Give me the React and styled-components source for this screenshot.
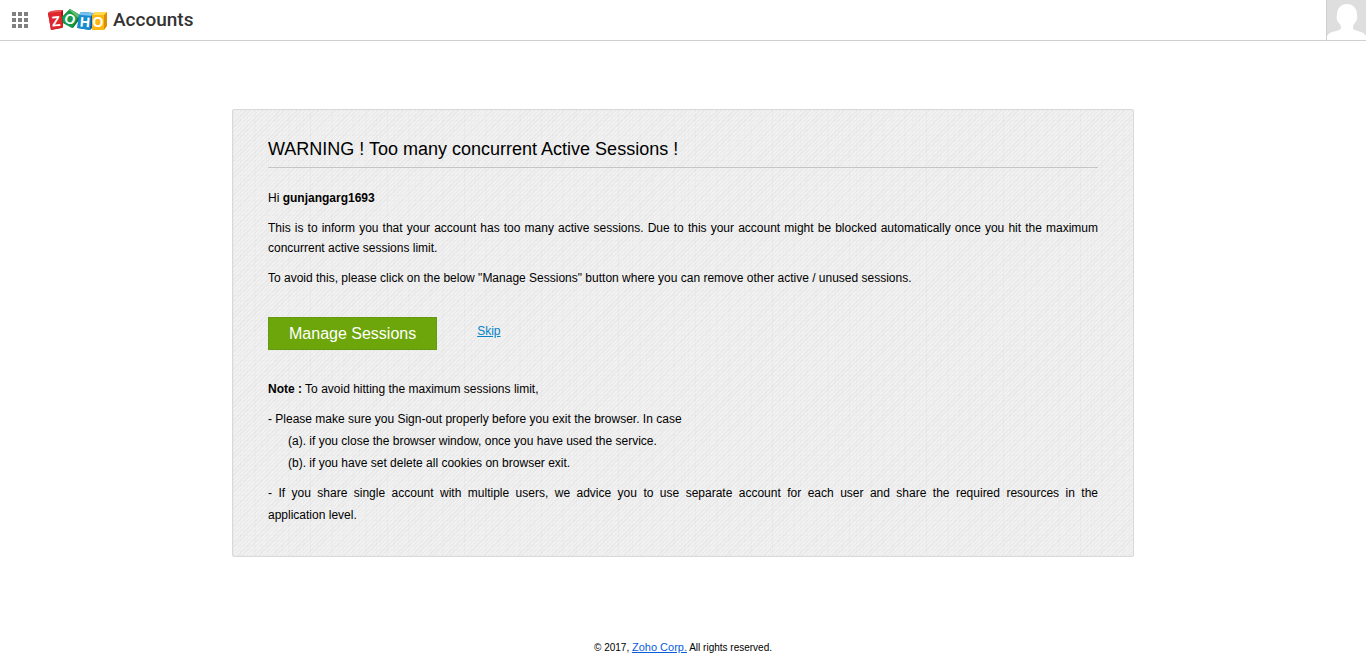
import React from "react";
import styled, { createGlobalStyle } from "styled-components";

const GlobalStyle = createGlobalStyle`
  *, *::before, *::after { box-sizing: border-box; }
  body {
    margin: 0;
    background: #fff;
    color: #000;
    font: 12px/20px "Liberation Sans", Arial, sans-serif;
  }
`;

const Header = styled.header`
  display: flex;
  align-items: center;
  height: 41px;
  padding-left: 12px;
  border-bottom: 1px solid #cfcfcf;
`;

const AppsButton = styled.button`
  display: grid;
  grid-template-columns: repeat(3, 4px);
  gap: 2px;
  padding: 0;
  border: 0;
  background: none;
  cursor: pointer;
`;

const Dot = styled.span`
  width: 4px;
  height: 4px;
  background: #808080;
`;

const Brand = styled.a`
  display: flex;
  align-items: center;
  gap: 5px;
  margin-left: 20px;
  color: #333;
  text-decoration: none;
`;

const BrandName = styled.span`
  font: 500 19px/24px Roboto, sans-serif;
`;

const ProfileButton = styled.button`
  display: block;
  width: 40px;
  height: 40px;
  margin-left: auto;
  padding: 0;
  border: 0;
  border-left: 1px solid #cfcfcf;
  background: #dedede;
  cursor: pointer;

  svg { display: block; }
`;

const Panel = styled.main`
  max-width: 902px;
  margin: 68px auto 0;
  padding: 24px 35px 30px;
  border: 1px solid #d9d9d9;
  border-radius: 2px;
  background:
    repeating-linear-gradient(135deg, rgba(0, 0, 0, 0.03) 0 1px, transparent 1px 3px),
    repeating-linear-gradient(90deg, rgba(0, 0, 0, 0.012) 0 1px, transparent 1px 7px),
    repeating-linear-gradient(90deg, rgba(0, 0, 0, 0.012) 0 1px, transparent 1px 11px),
    repeating-linear-gradient(0deg, rgba(0, 0, 0, 0.012) 0 1px, transparent 1px 5px),
    #f1f1f1;
`;

const Title = styled.h1`
  margin: 0 0 20px;
  padding-bottom: 3px;
  border-bottom: 1px solid #c4c6c6;
  font-size: 18px;
  font-weight: 400;
  line-height: 30px;
`;

const Paragraph = styled.p`
  margin: 0 0 10px;
  line-height: ${({ $loose }) => ($loose ? 22 : 20)}px;
  text-align: justify;

  &:last-child { margin-bottom: 0; }
`;

const Actions = styled.div`
  display: flex;
  align-items: flex-start;
  gap: 40px;
  margin: 29px 0;
`;

const PrimaryButton = styled.button`
  height: 33px;
  padding: 0 20px;
  border: 1px solid #649a0e;
  background: #6da60a;
  color: #fff;
  font: 16px/20px "Liberation Sans", Arial, sans-serif;
  cursor: pointer;
`;

const SkipLink = styled.a`
  padding-top: 4px;
  color: #0483c8;
`;

const CaseList = styled.ul`
  margin: -9px 0 8px;
  padding-left: 20px;
  line-height: 22px;
  list-style: none;
`;

const Footer = styled.footer`
  margin-top: 80px;
  font-size: 10px;
  text-align: center;

  a { color: #085ddc; font-size: 11px; }
`;

const TileLetter = styled.text`
  fill: #fff;
  font: 700 14px "Liberation Sans", Arial, sans-serif;
  text-anchor: middle;
`;

function ZohoLogo() {
  return (
    <svg width="60" height="22" viewBox="0 0 60 22" role="img" aria-label="Zoho">
      <path d="M0 4 3 2 15 1 15 18 14 19 3 21Z" fill="#a90f19" />
      <path d="M0 4 13 3 15 18 3 21Z" fill="#e0252c" />
      <path d="M0 4 3 2 15 1 13 3Z" fill="#ef5350" />
      <path d="M14 8 22 0 32 6 31 11 25 19 15 14Z" fill="#087b35" />
      <path d="M14 8 21 1 30 9 24 19 15 14Z" fill="#169b49" />
      <path d="M21 1 22 0 32 6 30 9Z" fill="#63bd70" />
      <path d="M31 6 33 3 46 4 44 19 42 21 30 19Z" fill="#075e9e" />
      <path d="M31 6 43 7 42 21 29 19Z" fill="#168bd0" />
      <path d="M31 6 33 3 46 4 43 7Z" fill="#72c4ef" />
      <path d="M44 6 47 3H59V17L56 21H44Z" fill="#dd8e05" />
      <path d="M44 6H56V21H44Z" fill="#fbb713" />
      <path d="M44 6 47 3H59L56 6Z" fill="#ffdc50" />
      <TileLetter x="8" y="17" transform="rotate(-6 8 12)">Z</TileLetter>
      <TileLetter x="22" y="15" transform="rotate(20 22 10)">O</TileLetter>
      <TileLetter x="37" y="18" transform="rotate(5 37 13)">H</TileLetter>
      <TileLetter x="50" y="18">O</TileLetter>
    </svg>
  );
}

export default function App() {
  return (
    <>
      <GlobalStyle />
      <Header>
        <AppsButton type="button" aria-label="Apps">
          {Array.from({ length: 9 }, (_, i) => <Dot key={i} />)}
        </AppsButton>
        <Brand href="#">
          <ZohoLogo />
          <BrandName>Accounts</BrandName>
        </Brand>
        <ProfileButton type="button" aria-label="Profile">
          <svg width="39" height="40" viewBox="0 0 39 40">
            <path
              fill="#fff"
              d="M20 4C26 4 30 8 30 15C31 19 29 22 27 24C26 27 25 29 28 30C33 32 37 32 39 36V40H0V36C2 32 7 32 12 30C15 29 14 27 13 24C10 22 9 18 10 15C10 8 14 4 20 4Z"
            />
          </svg>
        </ProfileButton>
      </Header>

      <Panel>
        <Title>WARNING ! Too many concurrent Active Sessions !</Title>
        <Paragraph>Hi <b>gunjangarg1693</b></Paragraph>
        <Paragraph>
          This is to inform you that your account has too many active sessions. Due to this your
          account might be blocked automatically once you hit the maximum concurrent active
          sessions limit.
        </Paragraph>
        <Paragraph>
          To avoid this, please click on the below "Manage Sessions" button where you can remove
          other active / unused sessions.
        </Paragraph>
        <Actions>
          <PrimaryButton type="button">Manage Sessions</PrimaryButton>
          <SkipLink href="#">Skip</SkipLink>
        </Actions>
        <Paragraph><b>Note :</b> To avoid hitting the maximum sessions limit,</Paragraph>
        <Paragraph>
          - Please make sure you Sign-out properly before you exit the browser. In case
        </Paragraph>
        <CaseList>
          <li>(a). if you close the browser window, once you have used the service.</li>
          <li>(b). if you have set delete all cookies on browser exit.</li>
        </CaseList>
        <Paragraph $loose>
          - If you share single account with multiple users, we advice you to use separate
          account for each user and share the required resources in the application&nbsp;level.
        </Paragraph>
      </Panel>

      <Footer>
        © 2017, <a href="#">Zoho Corp.</a> All rights reserved.
      </Footer>
    </>
  );
}
